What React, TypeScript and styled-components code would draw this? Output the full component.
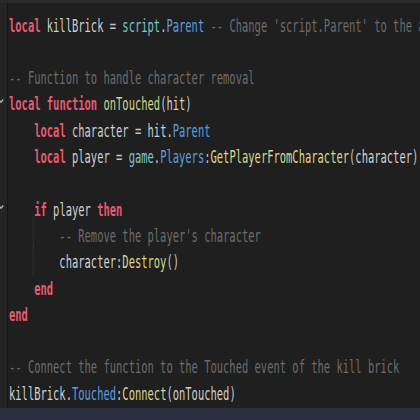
import React from "react";
import styled, { createGlobalStyle } from "styled-components";

const GlobalStyle = createGlobalStyle`
  html, body { margin: 0; padding: 0; background: #1f1f1f; }
`;

const LINE_H = 26.3;
const SCALE = 0.581;

type Kind = "kw" | "id" | "cm" | "glob" | "prop" | "fn" | "call" | "punc";

const colors: Record<Kind, string> = {
  kw: "#e65b71",
  id: "#d0d0d0",
  cm: "#6c6c6c",
  glob: "#7fc3c6",
  prop: "#5a9fe0",
  fn: "#cdd589",
  call: "#dbd78f",
  punc: "#c4c4c4",
};

const Editor = styled.div`
  width: 420px;
  height: 420px;
  background: #1f1f1f;
  display: flex;
  flex-direction: column;
  overflow: hidden;
`;

const TopStrip = styled.div`
  height: 3px;
  background: #2a2a2a;
  flex: none;
`;

const Body = styled.div`
  flex: 1;
  display: flex;
  min-height: 0;
`;

const Gutter = styled.div`
  width: 7px;
  flex: none;
  background: #242424;
  border-right: 1px solid #151515;
  padding-top: 9.6px;
  display: flex;
  flex-direction: column;
`;

const GutterRow = styled.div`
  height: ${LINE_H}px;
  position: relative;
`;

const Fold = styled.svg`
  position: absolute;
  left: -2px;
  top: 7px;
  width: 6px;
  height: 6px;
`;

const CodeViewport = styled.div`
  flex: 1;
  overflow: hidden;
  padding: 9.6px 0 0 1px;
`;

const CodeScaled = styled.div`
  width: 740px;
  transform: scaleX(${SCALE});
  transform-origin: 0 0;
  font-family: "DejaVu Sans Mono", "Liberation Mono", monospace;
  font-size: 18px;
`;

const Line = styled.div<{ $guide?: boolean }>`
  position: relative;
  height: ${LINE_H}px;
  line-height: ${LINE_H}px;
  white-space: pre;
  color: ${colors.id};

  &::before {
    content: "";
    display: ${(p) => (p.$guide ? "block" : "none")};
    position: absolute;
    left: ${4 * 10.84 - 2.5}px;
    top: -6px;
    bottom: 0;
    width: 1.6px;
    background: #3a3a3a;
  }
`;

const Tok = styled.span<{ $kind: Kind }>`
  color: ${(p) => colors[p.$kind]};
  font-weight: ${(p) => (p.$kind === "kw" ? 700 : 400)};
`;

const BottomBar = styled.div`
  height: 12px;
  flex: none;
  background: #2b3141;
`;

type Seg = [Kind, string];

const lines: { segs: Seg[]; fold?: boolean; guide?: boolean }[] = [
  {
    segs: [
      ["kw", "local"],
      ["id", " killBrick "],
      ["punc", "="],
      ["id", " "],
      ["glob", "script"],
      ["punc", "."],
      ["prop", "Parent"],
      ["cm", " -- Change 'script.Parent' to the actual kill brick part"],
    ],
  },
  { segs: [] },
  { segs: [["cm", "-- Function to handle character removal"]] },
  {
    fold: true,
    segs: [
      ["kw", "local"],
      ["id", " "],
      ["kw", "function"],
      ["id", " "],
      ["fn", "onTouched"],
      ["punc", "("],
      ["id", "hit"],
      ["punc", ")"],
    ],
  },
  {
    segs: [
      ["id", "    "],
      ["kw", "local"],
      ["id", " character "],
      ["punc", "="],
      ["id", " hit"],
      ["punc", "."],
      ["prop", "Parent"],
    ],
  },
  {
    segs: [
      ["id", "    "],
      ["kw", "local"],
      ["id", " player "],
      ["punc", "="],
      ["id", " "],
      ["glob", "game"],
      ["punc", "."],
      ["prop", "Players"],
      ["punc", ":"],
      ["call", "GetPlayerFromCharacter"],
      ["punc", "("],
      ["id", "character"],
      ["punc", ")"],
    ],
  },
  { segs: [] },
  {
    fold: true,
    segs: [
      ["id", "    "],
      ["kw", "if"],
      ["id", " player "],
      ["kw", "then"],
    ],
  },
  {
    guide: true,
    segs: [["cm", "        -- Remove the player's character"]],
  },
  {
    guide: true,
    segs: [
      ["id", "        character"],
      ["punc", ":"],
      ["call", "Destroy"],
      ["punc", "()"],
    ],
  },
  { segs: [["id", "    "], ["kw", "end"]] },
  { segs: [["kw", "end"]] },
  { segs: [] },
  { segs: [["cm", "-- Connect the function to the Touched event of the kill brick"]] },
  {
    segs: [
      ["id", "killBrick"],
      ["punc", "."],
      ["prop", "Touched"],
      ["punc", ":"],
      ["call", "Connect"],
      ["punc", "("],
      ["id", "onTouched"],
      ["punc", ")"],
    ],
  },
];

const FoldIcon = () => (
  <Fold viewBox="0 0 6 6">
    <path d="M0.8 1.5 L3 4.2 L5.2 1.5" fill="none" stroke="#b8b8b8" strokeWidth="1.2" />
  </Fold>
);

export default function App() {
  return (
    <>
      <GlobalStyle />
      <Editor>
        <TopStrip />
        <Body>
          <Gutter>
            {lines.map((l, i) => (
              <GutterRow key={i}>{l.fold ? <FoldIcon /> : null}</GutterRow>
            ))}
          </Gutter>
          <CodeViewport>
            <CodeScaled>
              {lines.map((l, i) => (
                <Line key={i} $guide={l.guide}>
                  {l.segs.map(([k, t], j) => (
                    <Tok key={j} $kind={k}>
                      {t}
                    </Tok>
                  ))}
                  {l.segs.length === 0 ? " " : null}
                </Line>
              ))}
            </CodeScaled>
          </CodeViewport>
        </Body>
        <BottomBar />
      </Editor>
    </>
  );
}
